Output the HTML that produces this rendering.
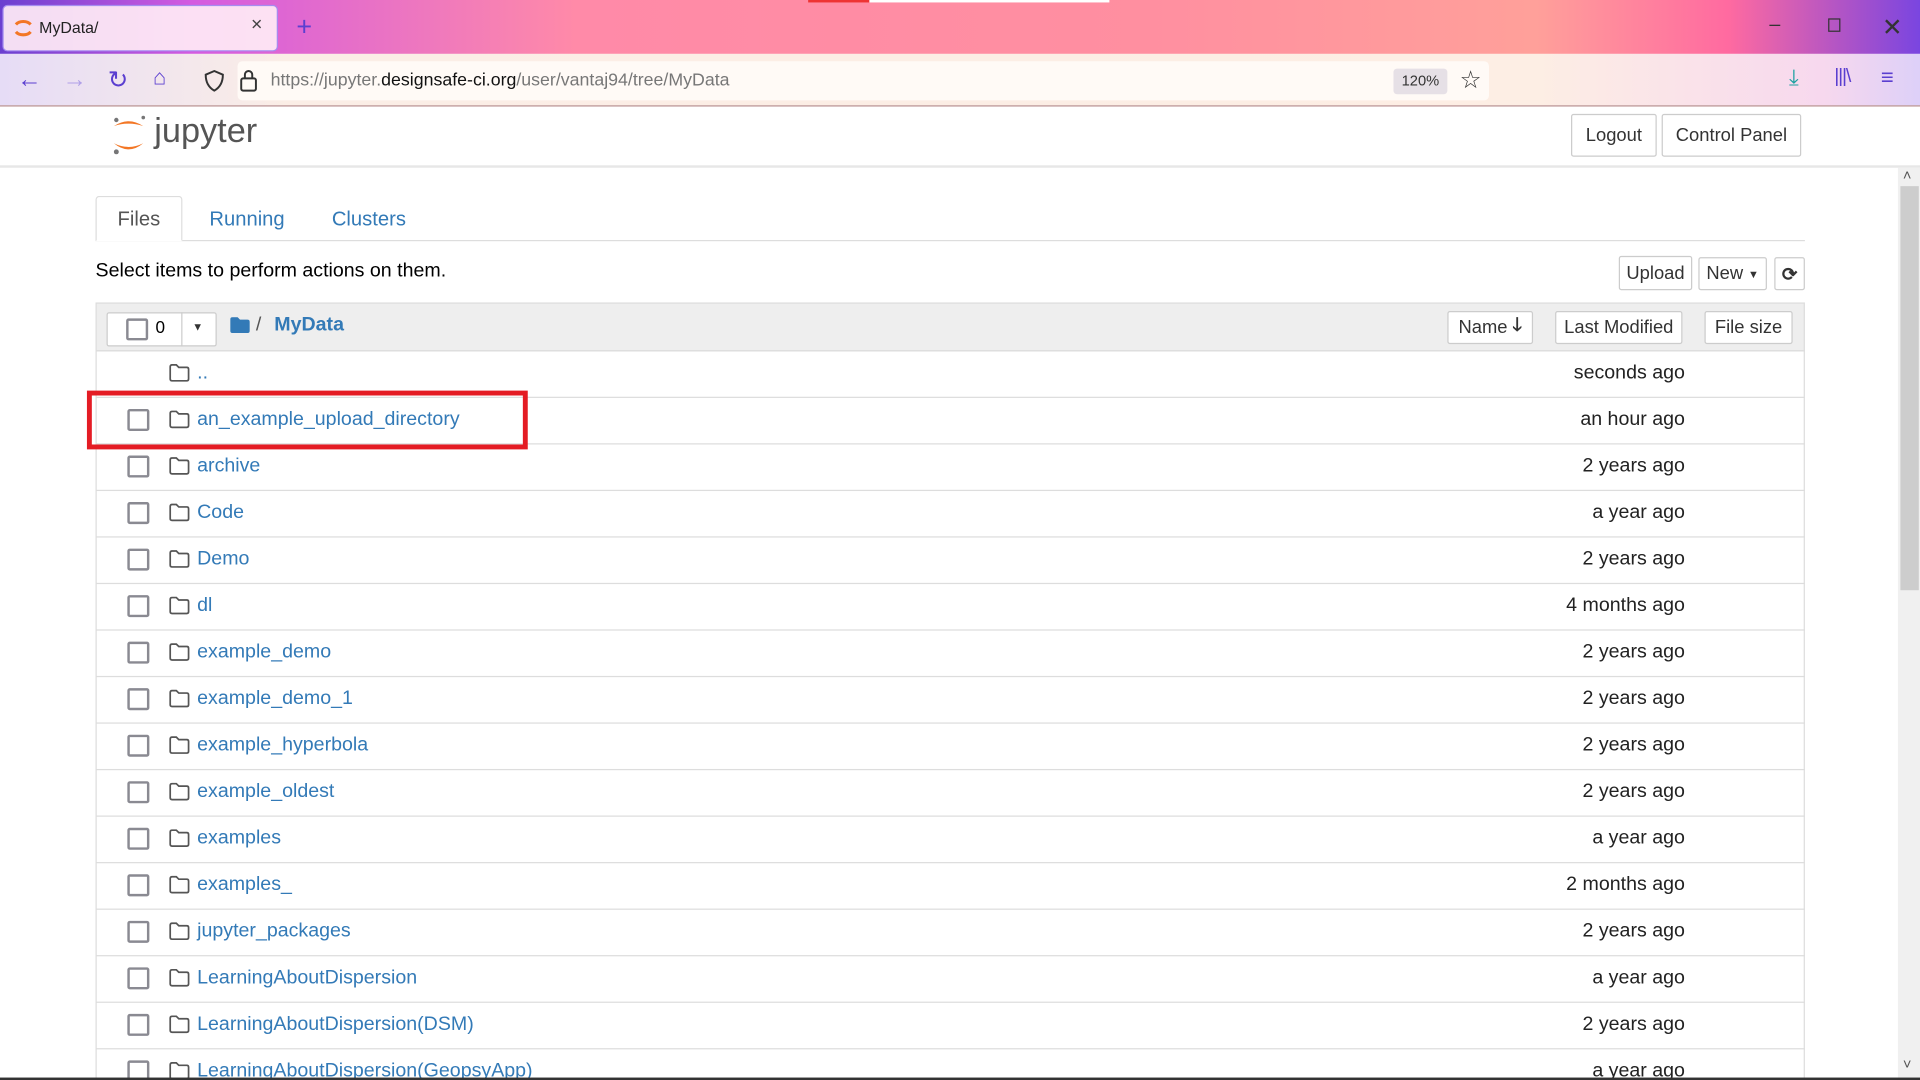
<!DOCTYPE html>
<html><head><meta charset="utf-8"><style>
html,body{margin:0;padding:0;width:1920px;height:1080px;overflow:hidden;background:#fff}
#w{width:1568px;height:882px;transform:scale(1.22449);transform-origin:0 0;position:relative;font-family:"Liberation Sans",sans-serif;overflow:hidden}
.a{position:absolute}
.btn{position:absolute;border:1px solid #ccc;border-radius:2px;background:#fff;color:#333;font-size:15px;display:flex;align-items:center;justify-content:center;box-sizing:border-box}
.row{position:absolute;left:78px;width:1396px;height:38px;border-top:1px solid #ddd;box-sizing:border-box}
.cb{position:absolute;left:26px;top:9px;width:14px;height:14px;border:2px solid #8a8a92;border-radius:2px}
.fi{position:absolute;left:60px;top:10px}
.nm{position:absolute;left:83px;top:9px;font-size:16px;color:#337ab7}
.dt{position:absolute;right:98px;top:9px;font-size:16px;color:#222}
</style></head><body><div id="w">
<div class="a" style="left:0;top:0;width:1568px;height:44px;background:linear-gradient(90deg,#6a3fd0 0%,#d45be0 10%,#ff8aa8 30%,#ff8fa0 60%,#ffa09a 80%,#ff6aa0 90%,#7a45e0 100%)"></div>
<div class="a" style="left:660px;top:0;width:50px;height:2px;background:#e33"></div>
<div class="a" style="left:710px;top:0;width:196px;height:2px;background:#fff"></div>
<div class="a" style="left:2px;top:4px;width:225px;height:38px;background:rgba(255,235,245,0.92);border:1px solid #a58cf0;border-radius:4px;box-sizing:border-box"></div>
<svg class="a" style="left:11px;top:15px" width="16" height="16"><path d="M2 5 A7 5 0 0 1 14 5" stroke="#f37726" stroke-width="2.5" fill="none"/><path d="M2 11 A7 5 0 0 0 14 11" stroke="#f37726" stroke-width="2.5" fill="none"/></svg>
<div class="a" style="left:32px;top:15px;font-size:13px;color:#222">MyData/</div>
<div class="a" style="left:205px;top:12px;font-size:16px;color:#444">×</div>
<div class="a" style="left:242px;top:9px;font-size:22px;color:#5b3fd0">+</div>
<div class="a" style="left:1445px;top:12px;font-size:16px;color:#333">–</div>
<div class="a" style="left:1493px;top:15px;width:8px;height:9px;border:1.5px solid #333"></div>
<div class="a" style="left:1537px;top:10px;font-size:20px;color:#333">✕</div>
<div class="a" style="left:0;top:44px;width:1568px;height:42px;background:linear-gradient(90deg,#e6dcf6 0%,#fbeee6 15%,#fdeee4 80%,#f7d8ee 95%,#ddd0f8 100%);border-bottom:1px solid #b89090"></div>
<div class="a" style="left:194px;top:50px;width:1022px;height:32px;background:#fffaf6;border-radius:4px"></div>
<div class="a" style="left:14px;top:54px;font-size:20px;color:#5b3fd0">←</div>
<div class="a" style="left:51px;top:54px;font-size:20px;color:#b0a0e8">→</div>
<div class="a" style="left:88px;top:53px;font-size:20px;color:#5b3fd0">↻</div>
<div class="a" style="left:125px;top:53px;font-size:18px;color:#5b3fd0">⌂</div>
<svg class="a" style="left:166px;top:57px" width="18" height="18"><path d="M9 1 L16 4 Q16 13 9 17 Q2 13 2 4 Z" stroke="#333" stroke-width="1.6" fill="none"/></svg>
<svg class="a" style="left:195px;top:56px" width="16" height="20"><rect x="2" y="8" width="12" height="10" rx="1.5" stroke="#333" stroke-width="1.6" fill="none"/><path d="M5 8 V5 A3 3 0 0 1 11 5 V8" stroke="#333" stroke-width="1.6" fill="none"/></svg>
<div class="a" style="left:221px;top:58px;font-size:14.5px;color:#777">https://jupyter.<span style="color:#111">designsafe-ci.org</span>/user/vantaj94/tree/MyData</div>
<div class="a" style="left:1138px;top:56px;width:44px;height:21px;background:#e6e0e6;border-radius:3px;font-size:12px;color:#333;text-align:center;line-height:21px">120%</div>
<div class="a" style="left:1192px;top:53px;font-size:20px;color:#333">☆</div>
<div class="a" style="left:1461px;top:53px;font-size:18px;color:#1aa0a0">⤓</div>
<div class="a" style="left:1498px;top:54px;font-size:16px;color:#5b3fd0;letter-spacing:-1px">|||\</div>
<div class="a" style="left:1536px;top:53px;font-size:18px;color:#5b3fd0">≡</div>
<svg class="a" style="left:90px;top:93px" width="32" height="36"><circle cx="5" cy="5" r="1.8" fill="#767677"/><circle cx="27" cy="3" r="1.5" fill="#767677"/><circle cx="5" cy="31" r="2" fill="#767677"/><path d="M3 10 Q15 2 27 10 Q15 6 3 10Z" fill="#f37726"/><path d="M3 24 Q15 34 27 24 Q15 30 3 24Z" fill="#f37726"/></svg>
<div class="a" style="left:126px;top:91px;font-size:28px;color:#555">jupyter</div>
<div class="btn" style="left:1283px;top:93px;width:70px;height:35px">Logout</div>
<div class="btn" style="left:1357px;top:93px;width:114px;height:35px">Control Panel</div>
<div class="a" style="left:0;top:135px;width:1568px;height:2px;background:#e7e7e7"></div>
<div class="a" style="left:1550px;top:137px;width:18px;height:745px;background:#f0f0f0"></div>
<div class="a" style="left:1552px;top:152px;width:15px;height:330px;background:#cdcdcd"></div>
<div class="a" style="left:1554px;top:136px;font-size:12px;color:#555">˄</div>
<div class="a" style="left:1554px;top:862px;font-size:12px;color:#555">˅</div>
<div class="a" style="left:78px;top:196px;width:1396px;height:1px;background:#ddd"></div>
<div class="a" style="left:78px;top:160px;width:71px;height:37px;border:1px solid #ddd;border-bottom-color:#fff;border-radius:3px 3px 0 0;background:#fff;box-sizing:border-box"></div>
<div class="a" style="left:96px;top:170px;font-size:16.5px;color:#555">Files</div>
<div class="a" style="left:171px;top:170px;font-size:16.5px;color:#337ab7">Running</div>
<div class="a" style="left:271px;top:170px;font-size:16.5px;color:#337ab7">Clusters</div>
<div class="a" style="left:78px;top:213px;font-size:16px;color:#000">Select items to perform actions on them.</div>
<div class="btn" style="left:1322px;top:209px;width:60px;height:28px">Upload</div>
<div class="btn" style="left:1387px;top:210px;width:56px;height:27px">New <span style="font-size:9px;margin-left:4px">▼</span></div>
<div class="btn" style="left:1449px;top:210px;width:25px;height:27px;font-size:15px;font-weight:bold">⟳</div>
<div class="a" style="left:78px;top:247px;width:1396px;height:40px;background:#eee;border:1px solid #ddd;box-sizing:border-box"></div>
<div class="a" style="left:87px;top:255px;width:90px;height:28px;background:#fff;border:1px solid #ccc;border-radius:2px;box-sizing:border-box"></div>
<div class="a" style="left:148px;top:255px;width:1px;height:28px;background:#ccc"></div>
<div class="a" style="left:103px;top:260px;width:14px;height:14px;border:2px solid #8a8a92;border-radius:2px"></div>
<div class="a" style="left:127px;top:259px;font-size:14px;color:#000">0</div>
<div class="a" style="left:157px;top:262px;font-size:9px;color:#333">▼</div>
<svg class="a" style="left:188px;top:259px" width="16" height="13"><path d="M0 2 Q0 0 2 0 H6 L8 2 H14 Q16 2 16 4 V11 Q16 13 14 13 H2 Q0 13 0 11Z" fill="#337ab7"/></svg>
<div class="a" style="left:209px;top:257px;font-size:16px;color:#555">/</div>
<div class="a" style="left:224px;top:257px;font-size:16px;color:#337ab7;font-weight:bold">MyData</div>
<div class="btn" style="left:1182px;top:254px;width:70px;height:27px">Name <b style="margin-left:4px">🡓</b></div>
<div class="btn" style="left:1270px;top:254px;width:104px;height:27px">Last Modified</div>
<div class="btn" style="left:1392px;top:254px;width:72px;height:27px">File size</div>
<div class="a" style="left:78px;top:286px;width:1px;height:600px;background:#ddd"></div>
<div class="a" style="left:1473px;top:286px;width:1px;height:600px;background:#ddd"></div>
<div class="row" style="top:286px"><svg class="fi" width="17" height="15"><path d="M1 2.5 Q1 1 2.5 1 H6 L8 3 H14.5 Q16 3 16 4.5 V12.5 Q16 14 14.5 14 H2.5 Q1 14 1 12.5Z" stroke="#555" stroke-width="1.4" fill="none"/></svg><div class="nm">..</div><div class="dt">seconds ago</div></div>
<div class="row" style="top:324px"><div class="cb"></div><svg class="fi" width="17" height="15"><path d="M1 2.5 Q1 1 2.5 1 H6 L8 3 H14.5 Q16 3 16 4.5 V12.5 Q16 14 14.5 14 H2.5 Q1 14 1 12.5Z" stroke="#555" stroke-width="1.4" fill="none"/></svg><div class="nm">an_example_upload_directory</div><div class="dt">an hour ago</div></div>
<div class="row" style="top:362px"><div class="cb"></div><svg class="fi" width="17" height="15"><path d="M1 2.5 Q1 1 2.5 1 H6 L8 3 H14.5 Q16 3 16 4.5 V12.5 Q16 14 14.5 14 H2.5 Q1 14 1 12.5Z" stroke="#555" stroke-width="1.4" fill="none"/></svg><div class="nm">archive</div><div class="dt">2 years ago</div></div>
<div class="row" style="top:400px"><div class="cb"></div><svg class="fi" width="17" height="15"><path d="M1 2.5 Q1 1 2.5 1 H6 L8 3 H14.5 Q16 3 16 4.5 V12.5 Q16 14 14.5 14 H2.5 Q1 14 1 12.5Z" stroke="#555" stroke-width="1.4" fill="none"/></svg><div class="nm">Code</div><div class="dt">a year ago</div></div>
<div class="row" style="top:438px"><div class="cb"></div><svg class="fi" width="17" height="15"><path d="M1 2.5 Q1 1 2.5 1 H6 L8 3 H14.5 Q16 3 16 4.5 V12.5 Q16 14 14.5 14 H2.5 Q1 14 1 12.5Z" stroke="#555" stroke-width="1.4" fill="none"/></svg><div class="nm">Demo</div><div class="dt">2 years ago</div></div>
<div class="row" style="top:476px"><div class="cb"></div><svg class="fi" width="17" height="15"><path d="M1 2.5 Q1 1 2.5 1 H6 L8 3 H14.5 Q16 3 16 4.5 V12.5 Q16 14 14.5 14 H2.5 Q1 14 1 12.5Z" stroke="#555" stroke-width="1.4" fill="none"/></svg><div class="nm">dl</div><div class="dt">4 months ago</div></div>
<div class="row" style="top:514px"><div class="cb"></div><svg class="fi" width="17" height="15"><path d="M1 2.5 Q1 1 2.5 1 H6 L8 3 H14.5 Q16 3 16 4.5 V12.5 Q16 14 14.5 14 H2.5 Q1 14 1 12.5Z" stroke="#555" stroke-width="1.4" fill="none"/></svg><div class="nm">example_demo</div><div class="dt">2 years ago</div></div>
<div class="row" style="top:552px"><div class="cb"></div><svg class="fi" width="17" height="15"><path d="M1 2.5 Q1 1 2.5 1 H6 L8 3 H14.5 Q16 3 16 4.5 V12.5 Q16 14 14.5 14 H2.5 Q1 14 1 12.5Z" stroke="#555" stroke-width="1.4" fill="none"/></svg><div class="nm">example_demo_1</div><div class="dt">2 years ago</div></div>
<div class="row" style="top:590px"><div class="cb"></div><svg class="fi" width="17" height="15"><path d="M1 2.5 Q1 1 2.5 1 H6 L8 3 H14.5 Q16 3 16 4.5 V12.5 Q16 14 14.5 14 H2.5 Q1 14 1 12.5Z" stroke="#555" stroke-width="1.4" fill="none"/></svg><div class="nm">example_hyperbola</div><div class="dt">2 years ago</div></div>
<div class="row" style="top:628px"><div class="cb"></div><svg class="fi" width="17" height="15"><path d="M1 2.5 Q1 1 2.5 1 H6 L8 3 H14.5 Q16 3 16 4.5 V12.5 Q16 14 14.5 14 H2.5 Q1 14 1 12.5Z" stroke="#555" stroke-width="1.4" fill="none"/></svg><div class="nm">example_oldest</div><div class="dt">2 years ago</div></div>
<div class="row" style="top:666px"><div class="cb"></div><svg class="fi" width="17" height="15"><path d="M1 2.5 Q1 1 2.5 1 H6 L8 3 H14.5 Q16 3 16 4.5 V12.5 Q16 14 14.5 14 H2.5 Q1 14 1 12.5Z" stroke="#555" stroke-width="1.4" fill="none"/></svg><div class="nm">examples</div><div class="dt">a year ago</div></div>
<div class="row" style="top:704px"><div class="cb"></div><svg class="fi" width="17" height="15"><path d="M1 2.5 Q1 1 2.5 1 H6 L8 3 H14.5 Q16 3 16 4.5 V12.5 Q16 14 14.5 14 H2.5 Q1 14 1 12.5Z" stroke="#555" stroke-width="1.4" fill="none"/></svg><div class="nm">examples_</div><div class="dt">2 months ago</div></div>
<div class="row" style="top:742px"><div class="cb"></div><svg class="fi" width="17" height="15"><path d="M1 2.5 Q1 1 2.5 1 H6 L8 3 H14.5 Q16 3 16 4.5 V12.5 Q16 14 14.5 14 H2.5 Q1 14 1 12.5Z" stroke="#555" stroke-width="1.4" fill="none"/></svg><div class="nm">jupyter_packages</div><div class="dt">2 years ago</div></div>
<div class="row" style="top:780px"><div class="cb"></div><svg class="fi" width="17" height="15"><path d="M1 2.5 Q1 1 2.5 1 H6 L8 3 H14.5 Q16 3 16 4.5 V12.5 Q16 14 14.5 14 H2.5 Q1 14 1 12.5Z" stroke="#555" stroke-width="1.4" fill="none"/></svg><div class="nm">LearningAboutDispersion</div><div class="dt">a year ago</div></div>
<div class="row" style="top:818px"><div class="cb"></div><svg class="fi" width="17" height="15"><path d="M1 2.5 Q1 1 2.5 1 H6 L8 3 H14.5 Q16 3 16 4.5 V12.5 Q16 14 14.5 14 H2.5 Q1 14 1 12.5Z" stroke="#555" stroke-width="1.4" fill="none"/></svg><div class="nm">LearningAboutDispersion(DSM)</div><div class="dt">2 years ago</div></div>
<div class="row" style="top:856px"><div class="cb"></div><svg class="fi" width="17" height="15"><path d="M1 2.5 Q1 1 2.5 1 H6 L8 3 H14.5 Q16 3 16 4.5 V12.5 Q16 14 14.5 14 H2.5 Q1 14 1 12.5Z" stroke="#555" stroke-width="1.4" fill="none"/></svg><div class="nm">LearningAboutDispersion(GeopsyApp)</div><div class="dt">a year ago</div></div>
<div class="a" style="left:0;top:880px;width:1568px;height:2px;background:#333"></div>
<div class="a" style="left:71px;top:319px;width:360px;height:48px;border:4px solid #e41c24;box-sizing:border-box"></div>
</div></body></html>
